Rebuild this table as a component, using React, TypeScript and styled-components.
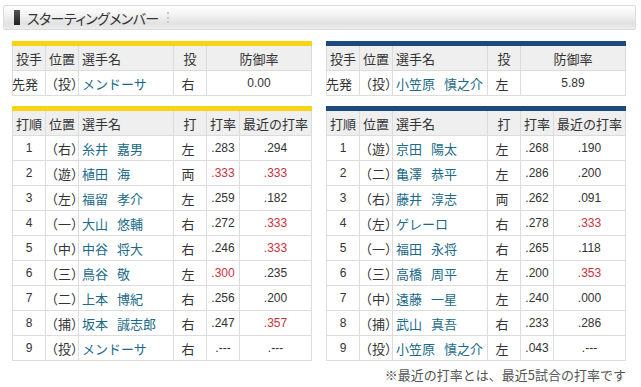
import React from "react";
import styled, { createGlobalStyle } from "styled-components";

const GlobalStyle = createGlobalStyle`
  body {
    margin: 0;
    background: #fff;
    color: #333;
    font-family: "Liberation Sans", "Noto Sans CJK JP", sans-serif;
  }
`;

const Page = styled.div`
  width: 641px;
  padding-top: 5px;
`;

const TitleBar = styled.div`
  display: flex;
  align-items: center;
  height: 23px;
  margin: 0 5px 0 3px;
  border: 1px solid #dcdcdc;
  border-radius: 2px;
  background: linear-gradient(#ffffff 0%, #f4f4f4 35%, #e2e2e2 75%, #ececec 100%);
  padding-left: 10px;
`;

const TitleMark = styled.span`
  width: 6px;
  height: 15px;
  margin-right: 7px;
  background: linear-gradient(#555, #222);
`;

const TitleText = styled.span`
  font-family: "Noto Sans CJK JP", sans-serif;
  font-size: 14px;
  font-feature-settings: "palt";
  letter-spacing: -0.6px;
  color: #333;
`;

const TitleDots = styled.span`
  height: 11px;
  margin-left: 8px;
  border-left: 2px dotted #c8c8c8;
`;

const Columns = styled.div`
  display: grid;
  grid-template-columns: 300px 300px;
  column-gap: 14px;
  padding-left: 12px;
  margin-top: 11px;
`;

const Team = styled.div`
  display: flex;
  flex-direction: column;
  gap: 10px;
`;

const Table = styled.table<{ $bar: string }>`
  width: 300px;
  table-layout: fixed;
  border-collapse: collapse;
  border-top: 5px solid ${(p) => p.$bar};
  font-size: 13px;
`;

const Th = styled.th<{ $align?: string }>`
  height: 24px;
  padding: 0 3px;
  background: #efefef;
  border: 1px solid #dcdcdc;
  border-top: none;
  font-weight: normal;
  text-align: ${(p) => p.$align || "left"};
  white-space: nowrap;
  font-family: "Noto Sans CJK JP", sans-serif;
  color: #333;
`;

const Td = styled.td<{ $align?: string; $num?: boolean; $hot?: boolean }>`
  height: 24px;
  padding: 0 3px;
  border: 1px solid #dcdcdc;
  text-align: ${(p) => p.$align || "left"};
  white-space: nowrap;
  font-size: ${(p) => (p.$num ? "12px" : "13px")};
  color: ${(p) => (p.$hot ? "#c9323e" : "#333")};
`;

const Pos = styled.span`
  font-family: "Noto Sans CJK JP", sans-serif;
  margin-left: -4px;
`;

const Name = styled.span`
  color: #1a6a88;
  font-family: "Noto Sans CJK JP", sans-serif;
`;

const Family = styled.span`
  margin-right: 9px;
`;

const Footnote = styled.div`
  text-align: right;
  padding-right: 15px;
  margin-top: 4px;
  font-size: 13px;
  color: #555;
  font-family: "Noto Sans CJK JP", sans-serif;
`;

type Pitcher = { role: string; pos: string; name: string[]; hand: string; era: string };
type Batter = { no: number; pos: string; name: string[]; hand: string; avg: string; recent: string };

const isHot = (v: string) => {
  const n = parseFloat(v);
  return !isNaN(n) && n >= 0.3;
};

const PlayerName = ({ name }: { name: string[] }) => (
  <Name>
    {name.length > 1 ? <Family>{name[0]}</Family> : name[0]}
    {name[1]}
  </Name>
);

const teams: { bar: string; pitcher: Pitcher; lineup: Batter[] }[] = [
  {
    bar: "#f7d414",
    pitcher: { role: "先発", pos: "（投）", name: ["メンドーサ"], hand: "右", era: "0.00" },
    lineup: [
      { no: 1, pos: "（右）", name: ["糸井", "嘉男"], hand: "左", avg: ".283", recent: ".294" },
      { no: 2, pos: "（遊）", name: ["植田", "海"], hand: "両", avg: ".333", recent: ".333" },
      { no: 3, pos: "（左）", name: ["福留", "孝介"], hand: "左", avg: ".259", recent: ".182" },
      { no: 4, pos: "（一）", name: ["大山", "悠輔"], hand: "右", avg: ".272", recent: ".333" },
      { no: 5, pos: "（中）", name: ["中谷", "将大"], hand: "右", avg: ".246", recent: ".333" },
      { no: 6, pos: "（三）", name: ["鳥谷", "敬"], hand: "左", avg: ".300", recent: ".235" },
      { no: 7, pos: "（二）", name: ["上本", "博紀"], hand: "右", avg: ".256", recent: ".200" },
      { no: 8, pos: "（捕）", name: ["坂本", "誠志郎"], hand: "右", avg: ".247", recent: ".357" },
      { no: 9, pos: "（投）", name: ["メンドーサ"], hand: "右", avg: ".---", recent: ".---" },
    ],
  },
  {
    bar: "#1c4a7c",
    pitcher: { role: "先発", pos: "（投）", name: ["小笠原", "慎之介"], hand: "左", era: "5.89" },
    lineup: [
      { no: 1, pos: "（遊）", name: ["京田", "陽太"], hand: "左", avg: ".268", recent: ".190" },
      { no: 2, pos: "（二）", name: ["亀澤", "恭平"], hand: "左", avg: ".286", recent: ".200" },
      { no: 3, pos: "（右）", name: ["藤井", "淳志"], hand: "両", avg: ".262", recent: ".091" },
      { no: 4, pos: "（左）", name: ["ゲレーロ"], hand: "右", avg: ".278", recent: ".333" },
      { no: 5, pos: "（一）", name: ["福田", "永将"], hand: "右", avg: ".265", recent: ".118" },
      { no: 6, pos: "（三）", name: ["高橋", "周平"], hand: "左", avg: ".200", recent: ".353" },
      { no: 7, pos: "（中）", name: ["遠藤", "一星"], hand: "左", avg: ".240", recent: ".000" },
      { no: 8, pos: "（捕）", name: ["武山", "真吾"], hand: "右", avg: ".233", recent: ".286" },
      { no: 9, pos: "（投）", name: ["小笠原", "慎之介"], hand: "左", avg: ".043", recent: ".---" },
    ],
  },
];

export default function App() {
  return (
    <Page>
      <GlobalStyle />
      <TitleBar>
        <TitleMark />
        <TitleText>スターティングメンバー</TitleText>
        <TitleDots />
      </TitleBar>
      <Columns>
        {teams.map((team, ti) => (
          <Team key={ti}>
            <Table $bar={team.bar}>
              <colgroup>
                <col style={{ width: 33 }} />
                <col style={{ width: 33 }} />
                <col style={{ width: 95 }} />
                <col style={{ width: 33 }} />
                <col />
              </colgroup>
              <thead>
                <tr>
                  <Th>投手</Th>
                  <Th>位置</Th>
                  <Th>選手名</Th>
                  <Th $align="center">投</Th>
                  <Th $align="center">防御率</Th>
                </tr>
              </thead>
              <tbody>
                <tr>
                  <Td>
                    <Pos>{team.pitcher.role}</Pos>
                  </Td>
                  <Td>
                    <Pos>{team.pitcher.pos}</Pos>
                  </Td>
                  <Td>
                    <PlayerName name={team.pitcher.name} />
                  </Td>
                  <Td $align="center">
                    <Pos>{team.pitcher.hand}</Pos>
                  </Td>
                  <Td $align="center" $num>
                    {team.pitcher.era}
                  </Td>
                </tr>
              </tbody>
            </Table>
            <Table $bar={team.bar}>
              <colgroup>
                <col style={{ width: 33 }} />
                <col style={{ width: 33 }} />
                <col style={{ width: 95 }} />
                <col style={{ width: 33 }} />
                <col style={{ width: 33 }} />
                <col />
              </colgroup>
              <thead>
                <tr>
                  <Th>打順</Th>
                  <Th>位置</Th>
                  <Th>選手名</Th>
                  <Th $align="center">打</Th>
                  <Th>打率</Th>
                  <Th>最近の打率</Th>
                </tr>
              </thead>
              <tbody>
                {team.lineup.map((b) => (
                  <tr key={b.no}>
                    <Td $align="center" $num>
                      {b.no}
                    </Td>
                    <Td>
                      <Pos>{b.pos}</Pos>
                    </Td>
                    <Td>
                      <PlayerName name={b.name} />
                    </Td>
                    <Td $align="center">
                      <Pos>{b.hand}</Pos>
                    </Td>
                    <Td $align="center" $num $hot={isHot(b.avg)}>
                      {b.avg}
                    </Td>
                    <Td $align="center" $num $hot={isHot(b.recent)}>
                      {b.recent}
                    </Td>
                  </tr>
                ))}
              </tbody>
            </Table>
          </Team>
        ))}
      </Columns>
      <Footnote>※最近の打率とは、最近5試合の打率です</Footnote>
    </Page>
  );
}
